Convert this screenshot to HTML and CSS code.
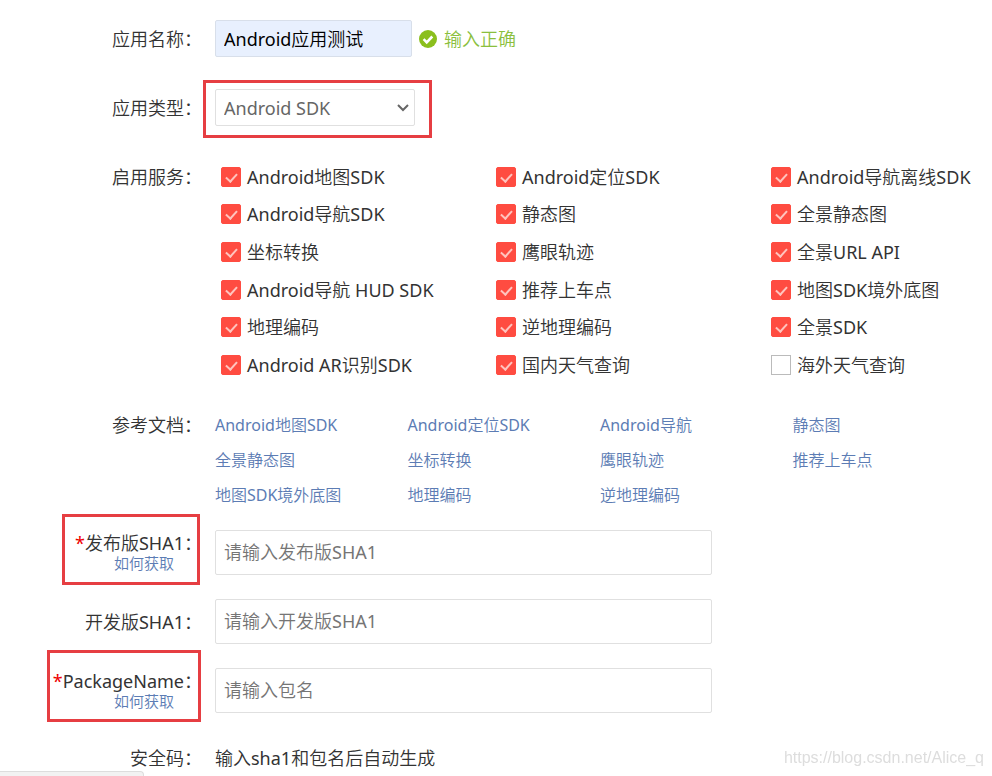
FILE: index.html
```
<!DOCTYPE html>
<html lang="zh-CN">
<head>
  <meta charset="UTF-8" />
  <meta name="viewport" content="width=device-width, initial-scale=1.0"/>
  <title>创建应用</title>
  <link rel="stylesheet" href="styles.css">
</head>
<body>

  <form class="app-form">
    <div class="row">
      <div class="label"><label for="app-name">应用名称：</label></div>
      <input class="field field-name" type="text" id="app-name" name="app-name" value="Android应用测试" />
      <span class="valid">
        <svg class="valid-icon" viewBox="0 0 18 18" aria-hidden="true">
          <circle cx="9" cy="9" r="9" fill="#8bbf1d"/>
          <path d="M4.6 9.2l3.1 3.1 5.6-5.8" fill="none" stroke="#fff" stroke-width="2.6"/>
        </svg>
        输入正确
      </span>
    </div>

    <div class="row">
      <div class="label"><label for="app-type">应用类型：</label></div>
      <div class="select-box marked">
        <select class="field" id="app-type" name="app-type">
          <option>Android SDK</option>
        </select>
        <svg class="arrow" viewBox="0 0 12 8" aria-hidden="true">
          <path d="M1 1l5 5 5-5" fill="none" stroke="#666" stroke-width="2"/>
        </svg>
      </div>
    </div>

    <div class="row row-services">
      <div class="label">启用服务：</div>
      <div class="services">
        <label><input type="checkbox" checked />Android地图SDK</label>
        <label><input type="checkbox" checked />Android定位SDK</label>
        <label><input type="checkbox" checked />Android导航离线SDK</label>
        <label><input type="checkbox" checked />Android导航SDK</label>
        <label><input type="checkbox" checked />静态图</label>
        <label><input type="checkbox" checked />全景静态图</label>
        <label><input type="checkbox" checked />坐标转换</label>
        <label><input type="checkbox" checked />鹰眼轨迹</label>
        <label><input type="checkbox" checked />全景URL API</label>
        <label><input type="checkbox" checked />Android导航 HUD SDK</label>
        <label><input type="checkbox" checked />推荐上车点</label>
        <label><input type="checkbox" checked />地图SDK境外底图</label>
        <label><input type="checkbox" checked />地理编码</label>
        <label><input type="checkbox" checked />逆地理编码</label>
        <label><input type="checkbox" checked />全景SDK</label>
        <label><input type="checkbox" checked />Android AR识别SDK</label>
        <label><input type="checkbox" checked />国内天气查询</label>
        <label><input type="checkbox" />海外天气查询</label>
      </div>
    </div>

    <div class="row row-docs">
      <div class="label">参考文档：</div>
      <div class="docs">
        <a href="#">Android地图SDK</a>
        <a href="#">Android定位SDK</a>
        <a href="#">Android导航</a>
        <a href="#">静态图</a>
        <a href="#">全景静态图</a>
        <a href="#">坐标转换</a>
        <a href="#">鹰眼轨迹</a>
        <a href="#">推荐上车点</a>
        <a href="#">地图SDK境外底图</a>
        <a href="#">地理编码</a>
        <a href="#">逆地理编码</a>
      </div>
    </div>

    <div class="row row-text">
      <div class="label marked mark-sha">
        <label for="sha-release"><span class="required">*</span>发布版SHA1：</label>
        <a class="how" href="#">如何获取</a>
      </div>
      <input class="field field-long" type="text" id="sha-release" name="sha-release" placeholder="请输入发布版SHA1" />
    </div>

    <div class="row row-text">
      <div class="label"><label for="sha-dev">开发版SHA1：</label></div>
      <input class="field field-long" type="text" id="sha-dev" name="sha-dev" placeholder="请输入开发版SHA1" />
    </div>

    <div class="row row-text">
      <div class="label marked mark-package">
        <label for="package"><span class="required">*</span>PackageName：</label>
        <a class="how" href="#">如何获取</a>
      </div>
      <input class="field field-long" type="text" id="package" name="package" placeholder="请输入包名" />
    </div>

    <div class="row row-code">
      <div class="label">安全码：</div>
      <span>输入sha1和包名后自动生成</span>
    </div>
  </form>

  <div class="status-bar"></div>
  <div class="watermark">https://blog.csdn.net/Alice_q</div>

</body>
</html>
```
FILE: styles.css
```
* {
  box-sizing: border-box;
}
body {
  margin: 0;
  background-color: #fff;
  color: #333;
  font-family: "Noto Sans", "Noto Sans CJK SC DemiLight", "Noto Sans CJK SC", sans-serif;
  font-size: 18px;
  line-height: 20px;
}
a {
  color: #5c7cb4;
  text-decoration: none;
}
.app-form {
  padding: 20px 7px 0 0;
}
.row {
  display: flex;
  align-items: center;
  margin-bottom: 32px;
}
.label {
  flex: none;
  width: 202px;
  margin-right: 13px;
  text-align: right;
  white-space: nowrap;
}
.required {
  color: #e00;
}
.how {
  display: block;
  padding-right: 28px;
  font-size: 15px;
}

/* fields */
.field {
  height: 37px;
  padding: 0 8px 2px;
  border: 1px solid #e0e0e0;
  border-radius: 2px;
  background-color: #fff;
  color: #666;
  font: inherit;
}
.field-name {
  width: 197px;
  border-color: #d8dfea;
  background-color: #e8f0fe;
  color: #000;
}
.field-long {
  width: 497px;
  height: 45px;
}
.field::placeholder {
  color: #757575;
  opacity: 1;
}
.valid {
  display: flex;
  align-items: center;
  gap: 7px;
  margin-left: 7px;
  color: #8bbf3d;
}
.valid-icon {
  width: 18px;
  height: 18px;
}
.select-box {
  position: relative;
}
.select-box select {
  display: block;
  width: 200px;
  padding-bottom: 0;
  appearance: none;
}
.arrow {
  position: absolute;
  top: 15px;
  right: 6px;
  width: 12px;
  height: 8px;
  pointer-events: none;
}

/* red frames over the important fields */
.marked {
  position: relative;
}
.marked::after {
  content: "";
  position: absolute;
  inset: -9px -17px -12px -12px;
  border: 3px solid #e63e42;
  pointer-events: none;
}
.mark-sha::after {
  inset: -19px 2px -12px 62px;
}
.mark-package::after {
  inset: -21px 1px -11px 47px;
}

/* services */
.row-services {
  align-items: flex-start;
  margin-bottom: 24px;
}
.row-services .label {
  line-height: 38px;
}
.services {
  flex: 1;
  display: grid;
  grid-template-columns: 275px 275px 1fr;
  grid-auto-rows: 1fr;
  min-height: 226px;
  padding-left: 6px;
}
.services label {
  display: flex;
  align-items: center;
  gap: 6px;
  white-space: nowrap;
}
.services input {
  position: relative;
  width: 20px;
  height: 20px;
  margin: 0;
  border: 1px solid #bbb;
  background-color: #fff;
  appearance: none;
}
.services input:checked {
  border-color: #ff4c41;
  border-radius: 2px;
  background-color: #ff4c41;
}
.services input:checked::after {
  content: "";
  position: absolute;
  top: 3px;
  left: 6px;
  width: 5px;
  height: 9px;
  border: solid #ffc4be;
  border-width: 0 2px 2px 0;
  transform: rotate(42deg);
}

/* docs */
.row-docs {
  align-items: flex-start;
  margin-bottom: 17px;
  line-height: 35px;
}
.docs {
  flex: 1;
  display: grid;
  grid-template-columns: repeat(4, 1fr);
  font-size: 16px;
}

.row-text {
  margin-bottom: 24px;
}
.row-code {
  margin: 35px 0 0;
}

/* browser status bar and page watermark */
.status-bar {
  position: fixed;
  left: 0;
  bottom: 0;
  width: 144px;
  height: 5px;
  border: 1px solid #ddd;
  border-width: 1px 1px 0 0;
  border-top-right-radius: 4px;
  background-color: #f2f2f2;
}
.watermark {
  position: fixed;
  right: 8px;
  bottom: 8px;
  color: #ddd;
  font-family: "Liberation Sans", sans-serif;
  font-size: 16px;
}
```
